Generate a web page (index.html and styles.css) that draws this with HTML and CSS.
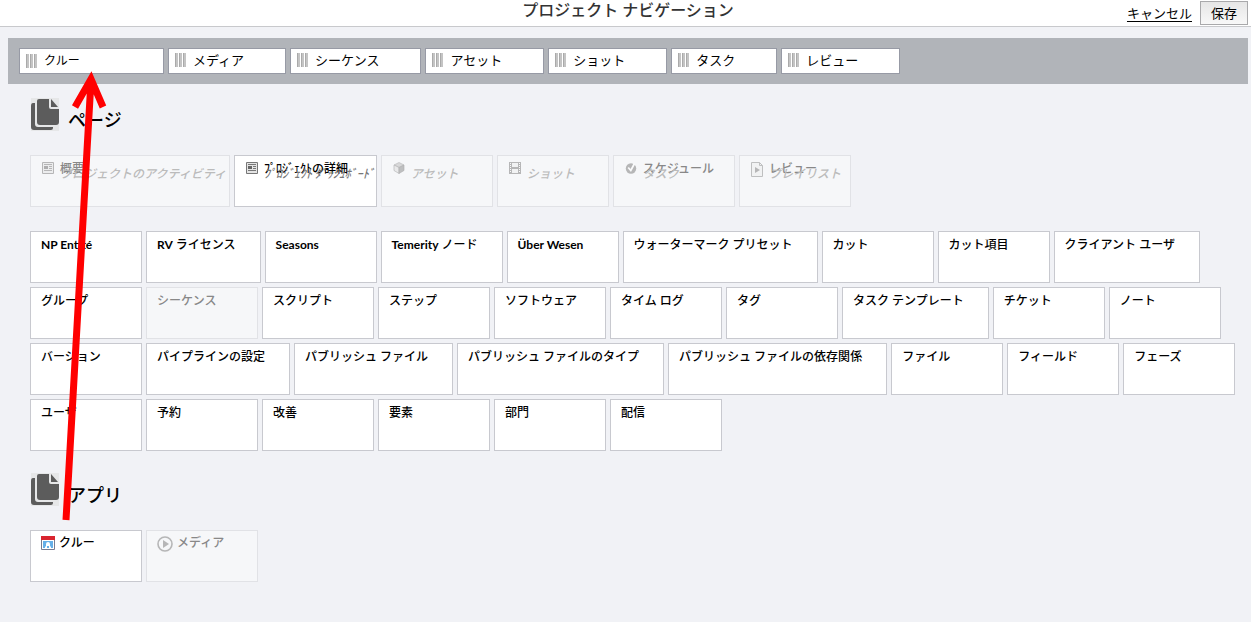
FILE: index.html
```html
<!DOCTYPE html>
<html lang="ja">
<head>
<meta charset="utf-8">
<title>プロジェクト ナビゲーション</title>
<link rel="stylesheet" href="styles.css">
</head>
<body>
<svg class="defs" aria-hidden="true">
  <symbol id="pages" viewBox="0 0 28 33">
    <path fill="#e6e7e8" d="M0 0h28v33H0z"/>
    <path fill="#5c5c5c" d="M2 5h2v21q0 3 3 3h15v1q0 2-2 2H3q-3 0-3-3V8q0-3 2-3z"/>
    <path fill="#5c5c5c" d="M8 1h10v8q0 2 2 2h8v13q0 3-3 3H9q-3 0-3-3V3q0-2 2-2z"/>
    <path fill="#5c5c5c" d="M20 1l7 8h-7z"/>
  </symbol>
  <symbol id="report" viewBox="0 0 12 12">
    <path fill="#e4e4e4" stroke="#777" d="M.5.5h11v11H.5z"/>
    <path stroke="#777" d="M2 2.500h8M7 4.500h3M7 6.500h3M2 8.500h8"/>
    <path fill="#666" d="M2 4h4v3H2z"/>
  </symbol>
  <symbol id="cube" viewBox="0 0 12 12">
    <path fill="#bbb" stroke="#777" stroke-width=".6" d="M6 .5l5 2.500L6 5.500 1 3z"/>
    <path fill="#ddd" stroke="#666" stroke-width=".6" d="M1 3l5 2.500v6L1 8.500z"/>
    <path fill="#888" stroke="#666" stroke-width=".6" d="M11 3L6 5.500v6l5-3z"/>
  </symbol>
  <symbol id="film" viewBox="0 0 12 12">
    <path fill="#777" d="M0 0h12v12H0z"/>
    <path fill="#eee" d="M3 1h6v4H3zM3 7h6v4H3z"/>
    <path stroke="#fff" stroke-dasharray="1 1" d="M1.500 1v10M10.500 1v10"/>
  </symbol>
  <symbol id="check" viewBox="0 0 12 12">
    <circle cx="6" cy="6.500" r="5.200" fill="#777"/>
    <path fill="none" stroke="#fff" stroke-width="1.800" d="M3.200 5.500L5.800 8.500 9.500 1.500"/>
  </symbol>
  <symbol id="playlist" viewBox="0 0 12 15">
    <path fill="#eee" stroke="#888" d="M.5.5h8l3 3v11H.5z"/>
    <path fill="none" stroke="#888" d="M8.500.500v3h3"/>
    <path fill="#777" d="M4 5l5 3-5 3z"/>
  </symbol>
  <symbol id="crew" viewBox="0 0 14 14">
    <path fill="#fff" stroke="#777c91" d="M.5 3h13v10.500H.500z"/>
    <path fill="#d9252f" d="M0 0h14v4H0z"/>
    <path fill="#66b0e8" d="M2 5h10v7H2z"/>
    <path fill="#fff" d="M4 12v-1l1-1V8Q5 6 7 6t2 2v2l1 1v1z"/>
    <path fill="#66b0e8" d="M6 10h2v2H6z"/>
  </symbol>
  <symbol id="play" viewBox="0 0 16 16">
    <circle cx="8" cy="8" r="7" fill="none" stroke="#777" stroke-width="1.600"/>
    <path fill="#777" d="M6 4l6 4-6 4z"/>
  </symbol>
</svg>

<header class="topbar">
  <h1 class="topbar-title">プロジェクト ナビゲーション</h1>
  <div class="topbar-actions">
    <a class="cancel" href="#">キャンセル</a>
    <button class="save" type="button">保存</button>
  </div>
</header>

<nav class="tabs">
  <button class="tab tab-wide" type="button"><span class="grip"></span>クルー</button>
  <button class="tab" type="button"><span class="grip"></span>メディア</button>
  <button class="tab" type="button"><span class="grip"></span>シーケンス</button>
  <button class="tab" type="button"><span class="grip"></span>アセット</button>
  <button class="tab" type="button"><span class="grip"></span>ショット</button>
  <button class="tab" type="button"><span class="grip"></span>タスク</button>
  <button class="tab" type="button"><span class="grip"></span>レビュー</button>
</nav>

<main class="content">
  <section>
    <h2 class="section-title"><svg class="section-icon"><use href="#pages"/></svg><span>ページ</span></h2>
    <div class="cards pages">
      <button class="card page" type="button" disabled><svg class="icon"><use href="#report"/></svg><span class="name">概要</span><span class="detail">プロジェクトのアクティビティ</span></button>
      <button class="card page" type="button"><svg class="icon"><use href="#report"/></svg><span class="name">ﾌﾟﾛｼﾞｪｸﾄの詳細</span><span class="detail">ﾌﾟﾛｼﾞｪｸﾄ ﾀﾞｯｼｭﾎﾞｰﾄﾞ</span></button>
      <button class="card page" type="button" disabled><svg class="icon"><use href="#cube"/></svg><span class="detail">アセット</span></button>
      <button class="card page" type="button" disabled><svg class="icon"><use href="#film"/></svg><span class="detail">ショット</span></button>
      <button class="card page" type="button" disabled><svg class="icon"><use href="#check"/></svg><span class="name">スケジュール</span><span class="detail">タスク</span></button>
      <button class="card page" type="button" disabled><svg class="icon icon-tall"><use href="#playlist"/></svg><span class="name">レビュー</span><span class="detail">プレイリスト</span></button>
    </div>
    <div class="cards">
      <button class="card" type="button"><b>NP Entité</b></button>
      <button class="card" type="button"><span><b>RV</b> ライセンス</span></button>
      <button class="card" type="button"><b>Seasons</b></button>
      <button class="card" type="button"><span><b>Temerity</b> ノード</span></button>
      <button class="card" type="button"><b>Über Wesen</b></button>
      <button class="card" type="button">ウォーターマーク プリセット</button>
      <button class="card" type="button">カット</button>
      <button class="card" type="button">カット項目</button>
      <button class="card" type="button">クライアント ユーザ</button>
      <button class="card" type="button">グループ</button>
      <button class="card" type="button" disabled>シーケンス</button>
      <button class="card" type="button">スクリプト</button>
      <button class="card" type="button">ステップ</button>
      <button class="card" type="button">ソフトウェア</button>
      <button class="card" type="button">タイム ログ</button>
      <button class="card" type="button">タグ</button>
      <button class="card" type="button">タスク テンプレート</button>
      <button class="card" type="button">チケット</button>
      <button class="card" type="button">ノート</button>
      <button class="card" type="button">バージョン</button>
      <button class="card" type="button">パイプラインの設定</button>
      <button class="card" type="button">パブリッシュ ファイル</button>
      <button class="card" type="button">パブリッシュ ファイルのタイプ</button>
      <button class="card" type="button">パブリッシュ ファイルの依存関係</button>
      <button class="card" type="button">ファイル</button>
      <button class="card" type="button">フィールド</button>
      <button class="card" type="button">フェーズ</button>
      <button class="card" type="button">ユーザ</button>
      <button class="card" type="button">予約</button>
      <button class="card" type="button">改善</button>
      <button class="card" type="button">要素</button>
      <button class="card" type="button">部門</button>
      <button class="card" type="button">配信</button>
    </div>
  </section>
  <section>
    <h2 class="section-title"><svg class="section-icon"><use href="#pages"/></svg><span>アプリ</span></h2>
    <div class="cards">
      <button class="card app" type="button"><svg class="icon-crew"><use href="#crew"/></svg>クルー</button>
      <button class="card app" type="button" disabled><svg class="icon-play"><use href="#play"/></svg>メディア</button>
    </div>
  </section>
</main>

<svg class="arrow" viewBox="0 0 120 530" aria-hidden="true">
  <path d="M66 520L91 80M75 107L91 79L103 107"/>
</svg>
</body>
</html>
```

FILE: styles.css
```css
* { box-sizing: border-box; }

body {
  position: relative;
  margin: 0;
  min-height: 100vh;
  background: #f1f2f6;
  color: #000;
  font-family: Lato, "Noto Sans CJK JP", sans-serif;
  font-size: 13px;
  line-height: 18px;
}

button { font: inherit; color: inherit; }

.defs { position: absolute; width: 0; height: 0; }

.topbar {
  display: grid;
  grid-template-columns: 1fr auto 1fr;
  height: 27px;
  padding: 0 3px 0 8px;
  border-bottom: 1px solid #c8c9cc;
  background: #fff;
}
.topbar-title {
  grid-column: 2;
  margin: 0;
  font-size: 16px;
  font-weight: 500;
  line-height: 20px;
  color: #333;
}
.topbar-actions {
  display: flex;
  justify-content: flex-end;
  align-items: center;
  gap: 8px;
}
.cancel { color: #000; text-underline-offset: 3px; }
.save {
  height: 24px;
  padding: 0 10px;
  border: 1px solid #a9a9ab;
  background: linear-gradient(#e6e6e6, #f8f8f8);
}

.tabs {
  display: flex;
  flex-wrap: wrap;
  gap: 4px;
  margin: 11px 3px 0 8px;
  padding: 10px 11px;
  background: #b1b4b9;
}
.tab {
  display: flex;
  align-items: center;
  height: 26px;
  padding: 0 41px 2px 6px;
  border: 1px solid #979aa5;
  background: #fff;
}
.tab-wide { min-width: 145px; padding-bottom: 0; font-size: 12px; }
.grip {
  width: 11px;
  height: 14px;
  margin-right: 7px;
  background: repeating-linear-gradient(90deg, #aaa 0 1px, #c4c4c4 1px 3px, #fff 3px 4px);
}

.content { padding: 14px 3px 24px 30px; }
.section-title {
  display: flex;
  align-items: flex-end;
  gap: 9px;
  height: 33px;
  margin: 0 0 24px;
  padding-left: 1px;
  font-size: 18px;
  font-weight: 500;
  line-height: 22px;
}
.section-icon { width: 28px; height: 33px; }

.cards {
  display: flex;
  flex-wrap: wrap;
  gap: 4px;
  margin-bottom: 22px;
}
.pages { margin-bottom: 24px; }
.card {
  display: flex;
  align-items: flex-start;
  min-width: 112px;
  height: 52px;
  padding: 4px 24px 0 10px;
  border: 1px solid #c8c9cf;
  background: #fff;
  font-size: 12px;
  font-weight: 500;
  white-space: nowrap;
}
.card:disabled {
  border-color: #e1e2e6;
  background: #f6f7f9;
  color: #888;
}
.card.page {
  display: grid;
  grid-template-columns: auto 1fr;
  column-gap: 6px;
  padding-right: 1px;
  text-align: left;
}
.card.page:disabled { padding-right: 3px; }
.icon { grid-area: 1 / 1; width: 12px; height: 12px; margin: 2px 0 0 1px; }
.icon-tall { height: 15px; }
.name { grid-area: 1 / 2; padding-right: 17px; }
.detail {
  grid-area: 1 / 2;
  margin-top: 5px;
  color: #777;
  font-style: italic;
}
.card:disabled .detail { color: #bbb; }
.card:disabled svg { opacity: .5; }
.card.app { padding-top: 3px; }
.icon-crew { width: 14px; height: 14px; margin: 2px 4px 0 0; }
.icon-play { width: 16px; height: 16px; margin: 2px 4px 0 0; }

.arrow {
  position: absolute;
  top: 0;
  left: 0;
  width: 120px;
  height: 530px;
  pointer-events: none;
}
.arrow path { fill: none; stroke: #f00; stroke-width: 7; }
```
